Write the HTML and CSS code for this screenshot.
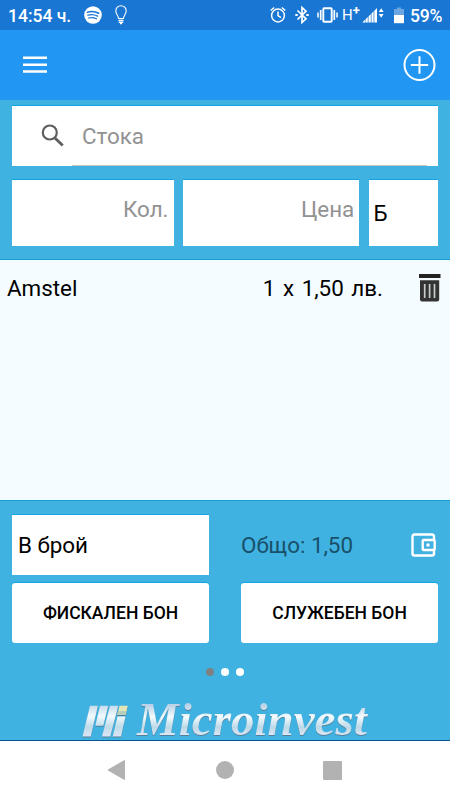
FILE: index.html
```html
<!DOCTYPE html>
<html lang="bg">
<head>
    <meta charset="UTF-8">
    <meta name="viewport" content="width=device-width, initial-scale=1.0">
    <title>Microinvest</title>
    <link rel="stylesheet" href="styles.css">
</head>
<body>
    <div class="status-bar">
        <span class="clock">14:54 ч.</span>
        <svg class="spotify" width="18" height="18" viewBox="0 0 18 18">
            <circle cx="9" cy="9" r="8.8" fill="#fff"/>
            <g fill="none" stroke="#1976d2" stroke-linecap="round">
                <path d="M3.5 6.2q6-1.8 11.2 1" stroke-width="1.7"/>
                <path d="M4 9.2q5-1.5 9.6.9" stroke-width="1.4"/>
                <path d="M4.5 12q4.3-1.2 8 .8" stroke-width="1.2"/>
            </g>
        </svg>
        <svg class="bulb" width="12" height="20" viewBox="0 0 12 20" fill="none" stroke="#fff" stroke-width="1.1">
            <path d="M3.5 13.5C3.5 10.5.8 9.5.8 5.900a5.200 5.200 0 0 1 10.400 0c0 3.600-2.700 4.600-2.700 7.600z"/>
            <path d="M3.5 15.5h5M3.8 17.3h4.400M5 18.600h2" stroke-width="1.3"/>
        </svg>
        <div class="status-icons">
            <svg width="16" height="18" viewBox="0 0 16 18" fill="none" stroke="#fff" stroke-width="1.5">
                <circle cx="8" cy="9.5" r="6.4"/>
                <path d="M8 5.5v4.200l3 2M.7 4.500l3.500-3M15.300 4.500l-3.500-3"/>
            </svg>
            <svg class="bluetooth" width="14" height="18" viewBox="0 0 14 18" fill="none" stroke="#fff" stroke-width="1.7">
                <path d="M2.500 4.500l8.500 8.300-4 3.700v-15l4 3.700-8.500 8.300"/>
                <path d="M.3 9h2.400M11.300 9h2.400" stroke-width="2"/>
            </svg>
            <svg class="vibrate" width="21" height="16" viewBox="0 0 21 16" fill="none" stroke="#fff">
                <rect x="6.3" y="1.3" width="8.4" height="13.4" rx=".8" stroke-width="1.9"/>
                <path d="M3.700 3v10M17.300 3v10" stroke-width="1.7"/>
                <path d="M1 5.500v5M20 5.500v5" stroke-width="1.5"/>
            </svg>
            <span class="network">H<b>+</b></span>
            <svg class="signal" width="22" height="16" viewBox="0 0 22 16" fill="#fff">
                <path d="M.3 15.500L3 12.800v2.700zM3.400 12.400l2.400-2.400v5.500H3.400zM6.500 9.400l2.300-2.300v8.400H6.500zM9.500 6.400l2.100-2.100v11.200H9.500zM12.300 3.700L15 1v14.500h-2.700z"/>
                <path d="M16.800 5l2.400-3.700L21.600 5zM16.800 7h4.800l-2.400 3.700z"/>
            </svg>
            <svg class="battery" width="10" height="17" viewBox="0 0 10 17">
                <path d="M3 .5h4V2h3v7H0V2h3z" fill="#6ba5e2"/>
                <path d="M0 8h10v8.200H0z" fill="#fff"/>
            </svg>
            <span class="percent">59%</span>
        </div>
    </div>

    <header class="app-bar">
        <svg width="24" height="18" viewBox="0 0 24 18" fill="#fff">
            <path d="M0 .5h24v2.500H0zM0 7.500h24v2.500H0zM0 14.300h24v2.500H0z"/>
        </svg>
        <svg width="33" height="33" viewBox="0 0 33 33" fill="none" stroke="#fff">
            <circle cx="16.5" cy="16" r="15" stroke-width="2"/>
            <path d="M16.500 7.300v17.400M7.800 16h17.400" stroke-width="2"/>
        </svg>
    </header>

    <section class="entry">
        <div class="field search">
            <svg width="24" height="24" viewBox="0 0 24 24" fill="none" stroke="#5e5e5e">
                <circle cx="8.8" cy="8.5" r="7" stroke-width="2.2"/>
                <path d="M13.700 13.700l8 7.800" stroke-width="2.8"/>
            </svg>
            <span class="search-text">Стока</span>
        </div>
        <div class="entry-row">
            <div class="field quantity">Кол.</div>
            <div class="field price">Цена</div>
            <div class="field group">Б</div>
        </div>
    </section>

    <main class="items">
        <div class="item">
            <span class="item-name">Amstel</span>
            <span class="item-price">1 x 1,50 лв.</span>
            <svg width="22" height="28" viewBox="0 0 22 28">
                <path d="M0 0h21.500v4H0z" fill="#222"/>
                <path d="M1 6.200h19.200v19.300q0 2-2 2H3q-2 0-2-2z" fill="#333"/>
                <path d="M5.700 10v14M10.600 10v14M15.500 10v14" stroke="#c8cbcc" stroke-width="1.7"/>
            </svg>
        </div>
    </main>

    <footer class="checkout">
        <div class="checkout-grid">
            <div class="field payment">В брой</div>
            <div class="total">
                <span>Общо: 1,50</span>
                <svg width="26" height="24" viewBox="0 0 26 24" fill="none" stroke="#fff">
                    <path d="M23 6.500V3.500q0-2-2-2H3.500q-2 0-2 2v17q0 2 2 2H21q2 0 2-2v-3" stroke-width="2.4"/>
                    <rect x="11.7" y="7" width="12" height="10" rx="1" stroke-width="2.4"/>
                    <circle cx="17" cy="12" r="1.8" fill="#fff" stroke="none"/>
                </svg>
            </div>
            <button class="receipt">ФИСКАЛЕН БОН</button>
            <button class="receipt">СЛУЖЕБЕН БОН</button>
        </div>
        <div class="dots">
            <span class="dot active"></span>
            <span class="dot"></span>
            <span class="dot"></span>
        </div>
        <div class="brand">
            <svg width="46" height="33" viewBox="0 0 46 33">
                <defs>
                    <linearGradient id="silver" x1="0" y1="0" x2="0" y2="32" gradientUnits="userSpaceOnUse">
                        <stop offset="0" stop-color="#c3d9eb"/>
                        <stop offset=".35" stop-color="#f1fafd"/>
                        <stop offset=".68" stop-color="#bfdcea"/>
                        <stop offset="1" stop-color="#dde5f5"/>
                    </linearGradient>
                </defs>
                <g fill="url(#silver)">
                    <path d="M8 .7h8L8.700 31.500H.5z"/>
                    <path d="M18 .7h8.300l-5 20h-8z"/>
                    <path d="M28 .7h8.300l-8 30.800h-8.300z"/>
                    <path d="M35.500 11.500h8l-4.500 20h-8.300z"/>
                </g>
                <path d="M37.500.7h8.300l-2.200 9.300h-8.400z" fill="#e1e6b8"/>
                <path d="M36.200 6h8.300l-.9 4h-8.400z" fill="#b9cfbd"/>
            </svg>
            <span class="brand-name">Microinvest</span>
        </div>
    </footer>

    <nav class="nav-bar">
        <svg width="19" height="22" viewBox="0 0 19 22">
            <path d="M17.500 1.500v19L1 11z" fill="#b2b2b2" stroke="#b2b2b2" stroke-linejoin="round"/>
        </svg>
        <span class="nav-home"></span>
        <span class="nav-recent"></span>
    </nav>
</body>
</html>
```
FILE: styles.css
```css
* {
    box-sizing: border-box;
}
body {
    margin: 0;
    width: 450px;
    height: 800px;
    overflow: hidden;
    display: flex;
    flex-direction: column;
    background-color: #fff;
    font-family: Roboto, sans-serif;
    font-size: 22.4px;
    color: #000;
}
svg {
    display: block;
    flex-shrink: 0;
}

/* status bar */
.status-bar {
    height: 30px;
    padding: 0 8px;
    display: flex;
    align-items: center;
    background-color: #1976d2;
    color: #fff;
    font-size: 17.5px;
    font-weight: 500;
    white-space: nowrap;
}
.clock {
    width: 76px;
    padding-top: 1px;
}
.bulb {
    margin-left: 13px;
}
.status-icons {
    margin-left: auto;
    display: flex;
    align-items: center;
}
.bluetooth {
    margin-left: 9px;
}
.vibrate {
    margin-left: 8px;
}
.network {
    margin-left: 4px;
    display: flex;
    width: 17px;
    font-size: 15px;
    font-weight: 400;
}
.network b {
    margin-top: -3px;
    font-size: 13px;
}
.signal {
    margin-left: 3px;
}
.battery {
    margin-left: 10px;
}
.percent {
    margin-left: 6px;
    padding-top: 1px;
    width: 32px;
    letter-spacing: -0.2px;
}

/* app bar */
.app-bar {
    height: 70px;
    padding: 0 14px 0 23px;
    display: flex;
    align-items: center;
    justify-content: space-between;
    background-color: #2196f3;
}

/* product entry */
.entry {
    height: 160px;
    padding: 6px 12px 0;
    background-color: #40b2e2;
    border-bottom: 1px solid #139fd8;
}
.field {
    background-color: #fff;
    box-shadow: 0 -1px #10a5df;
}
.search {
    height: 60px;
    padding: 0 11px 0 29px;
    display: flex;
    align-items: center;
}
.search-text {
    margin-left: 7px;
    padding-left: 10px;
    flex: 1;
    height: 60px;
    line-height: 61px;
    border-bottom: 1px solid #c6c6c6;
    color: #929292;
}
.entry-row {
    margin-top: 14px;
    display: grid;
    grid-template-columns: 161.5px 176.5px 69.5px;
    grid-template-rows: 66px;
    justify-content: space-between;
    line-height: 58px;
}
.quantity,
.price {
    padding-right: 5px;
    text-align: right;
    color: #929292;
}
.group {
    padding-left: 5px;
    line-height: 67px;
}

/* sold items */
.items {
    height: 240px;
    background-color: #f4fcff;
}
.item {
    height: 56px;
    padding: 0 9px 0 7px;
    display: flex;
    align-items: center;
}
.item-price {
    margin-left: auto;
    margin-right: 36px;
    word-spacing: 2px;
}

/* payment */
.checkout {
    height: 241px;
    padding: 14px 12px 0;
    background-color: #40b2e2;
    border-top: 1px solid #139fd8;
    border-bottom: 1px solid #07558f;
}
.checkout-grid {
    display: grid;
    grid-template-columns: 197px 197px;
    grid-template-rows: 60px 60px;
    row-gap: 8px;
    justify-content: space-between;
}
.payment {
    padding-left: 6px;
    line-height: 61px;
}
.total {
    display: flex;
    align-items: center;
    justify-content: space-between;
    padding-right: 1px;
    line-height: 60px;
    color: #185069;
}
.receipt {
    padding: 0;
    border: none;
    border-radius: 3px;
    background-color: #fff;
    box-shadow: 0 -1px #10a5df;
    font-family: inherit;
    font-size: 17.5px;
    font-weight: 500;
    color: #000;
}
.dots {
    margin-top: 25px;
    display: flex;
    justify-content: center;
    gap: 7px;
}
.dot {
    width: 8px;
    height: 8px;
    border-radius: 50%;
    background-color: #fff;
}
.dot.active {
    background-color: #808080;
}
.brand {
    margin: 29px 0 0 70px;
    height: 34px;
    display: flex;
    filter: drop-shadow(0.5px 1px 0.5px #527f99);
}
.brand-name {
    margin: -3px 0 0 5px;
    padding: 3px 4px 0;
    height: 39px;
    line-height: 29px;
    font-family: "Liberation Serif", serif;
    font-size: 47px;
    font-weight: bold;
    font-style: italic;
    color: transparent;
    background-image: linear-gradient(#b9d3e8 8%, #f3fbfe 38%, #bcd9e8 65%, #e2e8f5 88%);
    -webkit-background-clip: text;
    background-clip: text;
}

/* system navigation */
.nav-bar {
    height: 58px;
    padding: 0 108px 0 107px;
    display: flex;
    align-items: center;
    justify-content: space-between;
}
.nav-home {
    width: 18px;
    height: 18px;
    border-radius: 50%;
    background-color: #b2b2b2;
}
.nav-recent {
    width: 19px;
    height: 19px;
    border-radius: 1px;
    background-color: #b2b2b2;
}
```
